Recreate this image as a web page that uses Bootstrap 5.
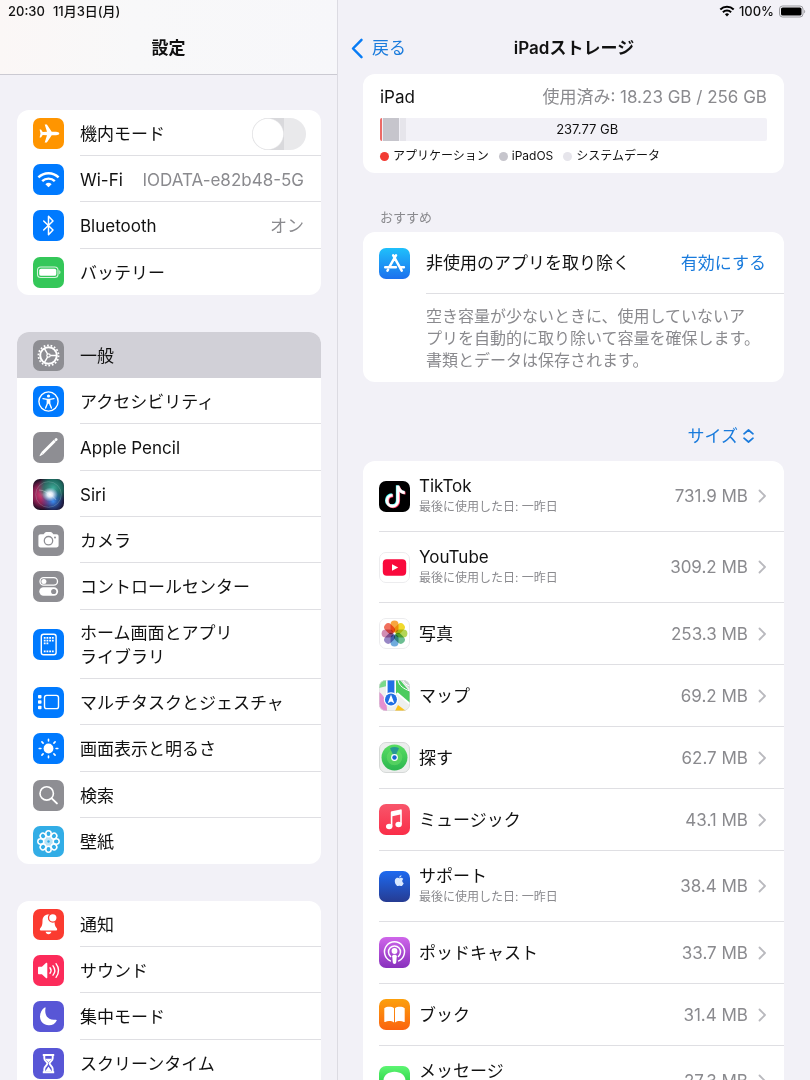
<!DOCTYPE html>
<html lang="ja">
<head>
<meta charset="utf-8">
<meta name="viewport" content="width=device-width, initial-scale=1">
<title>設定 – iPadストレージ</title>
<link href="https://cdn.jsdelivr.net/npm/bootstrap@5.3.0/dist/css/bootstrap.min.css" rel="stylesheet">
<style>
:root{--page:#f2f1f7;--line:#dfdfe3;--muted:#8a8a8e;--blue:#1a7bdc}
body{font-family:Inter,"Noto Sans CJK JP",sans-serif;font-size:17px;line-height:22px;color:#111;background:var(--page)}
.muted{color:var(--muted)}
.blue{color:var(--blue)}
.shell{display:grid;grid-template-columns:338px minmax(0,1fr);height:100vh}
.pane{overflow-y:auto;scrollbar-width:none}
.pane::-webkit-scrollbar{display:none}
.side{border-right:1px solid #dcdbe2}
.side-head{height:75px;border-bottom:1px solid #cbcad2;background:linear-gradient(90deg,#fbf7f6,#f8f8f9 40%,#f7f7fa)}
.status{height:22px;font-size:13px;font-weight:500}
.title-row{height:52px}
.title-row h1,.title-row h2{font-size:17px;line-height:22px;font-weight:600;margin:0}
.main-title{display:grid;grid-template-columns:1fr auto 1fr;align-items:center}
.panel{background:#fff;border-radius:12px;overflow:hidden}
.groups{padding:35px 16px 0 17px;display:grid;gap:37px}
.group-cut{border-radius:12px 12px 0 0}
.set-row{display:flex;align-items:center;gap:16px;padding-left:16px;min-height:46px;color:#111;text-decoration:none}
.set-row:nth-child(3n){min-height:47px}
.set-row.tall{min-height:69px;line-height:24px}
.set-row>.cell{display:flex;align-items:center;justify-content:space-between;flex:1;align-self:stretch;padding:2px 17px 0 0;border-bottom:1px solid var(--line)}
.set-row:last-child>.cell,.set-row.current>.cell{border-bottom:0}
.set-row.current{background:#d1d0d7}
.tile{width:31px;height:31px;flex:none;display:block}
.set-row .form-switch{padding:0;margin:0 -2px 0 0;min-height:0}
.form-switch .form-check-input{width:54px;height:32px;margin:0;float:none;display:block;border:0;background-color:#e9e9eb;
 background-image:radial-gradient(circle closest-side,#fff 92%,#d9d9dc 100%);background-size:32px 32px;background-position:left center;background-repeat:no-repeat}
.form-switch .form-check-input:checked{background-color:#34c759;background-position:right center}
.content{padding:0 26px 0 25px}
.plain{border:0;background:none;padding:0}
.usage{padding:12px 17px 9px 17px}
.usage-bar{height:23px;border-radius:2px;background:var(--page);gap:1px;font-size:13px;line-height:23px;margin-top:10px}
.seg-app{background:#ec6a66}.seg-os{background:#c6c5cc}.seg-sys{background:#e6e5eb}
.legend-list{font-size:12px;line-height:16px;gap:10px;margin-top:7px}
.dot{width:9px;height:9px;border-radius:50%;margin-right:4px}
.dot-app{background:#f23b34}.dot-os{background:#c6c5cc}.dot-sys{background:#e6e5eb}
.caption{font-size:13px;line-height:18px;margin:35px 0 6px 17px}
.rec{padding-left:16px}
.rec-head{display:flex;align-items:center;gap:16px}
.rec-head .cell{display:flex;align-items:center;justify-content:space-between;flex:1;height:62px;border-bottom:1px solid var(--line);padding-right:18px}
.rec p{font-size:16px;margin:0;padding:11px 0 11px 47px}
.sort{height:79px;padding:28px 29px 0 0}
.app-row{display:flex;align-items:center;height:62px;margin-left:16px;padding-right:17px;border-bottom:1px solid var(--line);color:#111;text-decoration:none}
.app-row.two{height:71px}
.app-row .tile{margin-right:9px}
.app-row small{display:block;font-size:12px;line-height:20px;color:var(--muted)}
.app-row .chev{margin-left:10px}
</style>
</head>
<body>
<svg width="0" height="0" class="position-absolute" aria-hidden="true">
 <defs>
  <linearGradient id="gStore" x2="0" y2="1"><stop stop-color="#1fc0fb"/><stop offset="1" stop-color="#1c70ee"/></linearGradient>
  <linearGradient id="gMusic" x2="0" y2="1"><stop stop-color="#f8566b"/><stop offset="1" stop-color="#fa2d48"/></linearGradient>
  <linearGradient id="gSup" x2="0" y2="1"><stop stop-color="#1d6af0"/><stop offset="1" stop-color="#263b92"/></linearGradient>
  <linearGradient id="gPod" x2="0" y2="1"><stop stop-color="#cf66ea"/><stop offset="1" stop-color="#8830bd"/></linearGradient>
  <linearGradient id="gBook" x2="0" y2="1"><stop stop-color="#fca00c"/><stop offset="1" stop-color="#fb6310"/></linearGradient>
  <linearGradient id="gMsg" x2="0" y2="1"><stop stop-color="#5df573"/><stop offset="1" stop-color="#0cbd2a"/></linearGradient>
  <linearGradient id="gFind" x2="0" y2="1"><stop stop-color="#59dd62"/><stop offset="1" stop-color="#2cb750"/></linearGradient>
  <radialGradient id="gS1" cx=".3" cy=".5" r=".5"><stop stop-color="#e2447f"/><stop offset=".6" stop-color="#a3245c" stop-opacity=".8"/><stop offset="1" stop-color="#a3245c" stop-opacity="0"/></radialGradient>
  <radialGradient id="gS2" cx=".65" cy=".3" r=".5"><stop stop-color="#3fae9b"/><stop offset=".6" stop-color="#1e7c6b" stop-opacity=".8"/><stop offset="1" stop-color="#1e7c6b" stop-opacity="0"/></radialGradient>
  <radialGradient id="gS3" cx=".65" cy=".72" r=".4"><stop stop-color="#3b8cf0"/><stop offset="1" stop-color="#2c50b8" stop-opacity="0"/></radialGradient>
  <radialGradient id="gS4"><stop stop-color="#fff"/><stop offset=".35" stop-color="#eef4ff" stop-opacity=".9"/><stop offset="1" stop-color="#cfe0ff" stop-opacity="0"/></radialGradient>
  <clipPath id="cut"><rect width="31" height="31" rx="7"/></clipPath>
  <symbol id="chev" viewBox="0 0 9 14"><path d="M1.500 1.500 7 7l-5.500 5.500" fill="none" stroke="#b9b9be" stroke-width="1.800" stroke-linecap="round" stroke-linejoin="round"/></symbol>
 </defs>
</svg>

<div class="shell">
 <nav class="pane side" aria-label="設定">
  <header class="side-head">
   <div class="status d-flex align-items-center ps-2"><span class="me-2">20:30</span><span>11月3日(月)</span></div>
   <div class="title-row d-flex align-items-center justify-content-center"><h1>設定</h1></div>
  </header>

  <div class="groups">
   <div class="panel">
    <div class="set-row">
     <svg class="tile" viewBox="0 0 31 31"><rect width="31" height="31" rx="7" fill="#ff9500"/><path fill="#fff" d="M26.300 15.500c0-1-1.600-1.700-3.300-1.700h-4.300L13.900 6.600h-2.200l2.300 7.200-4.300.2-1.700-2.400H6.600l.9 3.900-.9 3.900H8l1.700-2.400 4.300.2-2.300 7.200h2.200l4.800-7.200H23c1.700 0 3.300-.7 3.300-1.700z"/></svg>
     <div class="cell"><label for="air">機内モード</label><div class="form-check form-switch"><input class="form-check-input" type="checkbox" role="switch" id="air"></div></div>
    </div>
    <a class="set-row" href="#wifi">
     <svg class="tile" viewBox="0 0 31 31"><rect width="31" height="31" rx="7" fill="#007aff"/><g fill="none" stroke="#fff" stroke-width="2.400"><path d="M5.400 13.400a14.300 14.300 0 0 1 20.200 0M9.200 17.200a9 9 0 0 1 12.600 0"/></g><path fill="#fff" d="M12.400 20.200a4.600 4.600 0 0 1 6.200 0l-3.100 3.100z"/></svg>
     <div class="cell"><span>Wi-Fi</span><span class="muted">IODATA-e82b48-5G</span></div>
    </a>
    <a class="set-row" href="#bt">
     <svg class="tile" viewBox="0 0 31 31"><rect width="31" height="31" rx="7" fill="#007aff"/><path fill="none" stroke="#fff" stroke-width="1.500" stroke-linejoin="round" stroke-linecap="round" d="m10.700 11 9.300 9-4.500 4.700V6.300L20 11l-9.300 9"/></svg>
     <div class="cell"><span>Bluetooth</span><span class="muted">オン</span></div>
    </a>
    <a class="set-row" href="#battery">
     <svg class="tile" viewBox="0 0 31 31"><rect width="31" height="31" rx="7" fill="#34c759"/><rect x="4.500" y="10" width="20.500" height="10.500" rx="3.300" fill="none" stroke="#fff" stroke-width="1.100" opacity=".8"/><rect x="6.200" y="11.700" width="17.100" height="7.100" rx="1.900" fill="#fff"/><path fill="#fff" opacity=".8" d="M26.300 13.300c1.500.4 1.500 3.500 0 3.900z"/></svg>
     <div class="cell"><span>バッテリー</span></div>
    </a>
   </div>

   <div class="panel">
    <a class="set-row current" href="#general" aria-current="page">
     <svg class="tile" viewBox="0 0 31 31"><rect width="31" height="31" rx="7" fill="#8e8e93"/><g fill="none" stroke="#fff"><circle cx="15.500" cy="15.500" r="10.100" stroke-width="1.700" stroke-dasharray="1.760 1.766"/><circle cx="15.500" cy="15.500" r="8.300" stroke-width="2"/><circle cx="15.500" cy="15.500" r="1.700" stroke-width="1.200"/><path stroke-width="1.500" d="M17.200 15.500h6M14.600 14l-3-5.200M14.600 17l-3 5.200"/></g></svg>
     <div class="cell"><span>一般</span></div>
    </a>
    <a class="set-row" href="#acc">
     <svg class="tile" viewBox="0 0 31 31"><rect width="31" height="31" rx="7" fill="#007aff"/><circle cx="15.500" cy="15.500" r="9.600" fill="none" stroke="#fff" stroke-width="1.400"/><circle cx="15.500" cy="10" r="1.600" fill="#fff"/><path d="m10 12.600 4.200.8h2.600l4.200-.8M14.400 14v3.400L12.600 22M16.600 14v3.400l1.800 4.600" fill="none" stroke="#fff" stroke-width="1.400" stroke-linecap="round" stroke-linejoin="round"/><path fill="#fff" d="M13.900 13h3.200v4.700h-3.200z"/></svg>
     <div class="cell"><span>アクセシビリティ</span></div>
    </a>
    <a class="set-row" href="#pencil">
     <svg class="tile" viewBox="0 0 31 31"><rect width="31" height="31" rx="7" fill="#8e8e93"/><path stroke="#fff" stroke-width="2.800" stroke-linecap="round" d="m22.900 7.700.3-.3"/><path stroke="#fff" stroke-width="2.800" d="M21.800 8.800 9.300 21.300"/><path fill="#fff" d="m8.300 20.300-1.700 3.300c-.1.500.2.700.7.500l3-1.800z"/></svg>
     <div class="cell"><span>Apple Pencil</span></div>
    </a>
    <a class="set-row" href="#siri">
     <svg class="tile" viewBox="0 0 31 31"><g clip-path="url(#cut)"><path fill="#190d22" d="M0 0h31v31H0z"/><path fill="url(#gS1)" d="M0 0h31v31H0z"/><path fill="url(#gS2)" d="M0 0h31v31H0z"/><path fill="url(#gS3)" d="M0 0h31v31H0z"/><circle cx="15.500" cy="15.500" r="12.800" fill="none" stroke="#a9c3c9" stroke-opacity=".35" stroke-width=".8"/><ellipse cx="17" cy="15.500" rx="8" ry="7" fill="url(#gS4)"/><path d="M6 11c5 0 8 3 11 4.500s5 4 6 5.500" stroke="#fff" stroke-opacity=".3" fill="none"/></g></svg>
     <div class="cell"><span>Siri</span></div>
    </a>
    <a class="set-row" href="#camera">
     <svg class="tile" viewBox="0 0 31 31"><rect width="31" height="31" rx="7" fill="#8e8e93"/><path fill="#fff" d="M7.600 9.300h3l1.300-1.600c.4-.5.800-.7 1.400-.7h4.400c.6 0 1 .2 1.400.7l1.300 1.600h3c1.400 0 2.200.8 2.200 2.200v8.700c0 1.400-.8 2.200-2.200 2.200H7.600c-1.400 0-2.200-.8-2.200-2.200v-8.700c0-1.400.8-2.200 2.200-2.200z"/><circle cx="15.500" cy="15.700" r="4.200" fill="none" stroke="#8e8e93" stroke-width="1.300"/><circle cx="22" cy="12.400" r="1" fill="#8e8e93"/></svg>
     <div class="cell"><span>カメラ</span></div>
    </a>
    <a class="set-row" href="#cc">
     <svg class="tile" viewBox="0 0 31 31"><rect width="31" height="31" rx="7" fill="#8e8e93"/><rect x="7" y="6.700" width="17.500" height="7.400" rx="3.700" fill="none" stroke="#fff" stroke-width="1.300"/><circle cx="10.900" cy="10.400" r="2.500" fill="#fff"/><rect x="6.300" y="16.300" width="18.800" height="8.500" rx="4.200" fill="#fff"/><circle cx="20.700" cy="20.500" r="2.600" fill="#8e8e93"/></svg>
     <div class="cell"><span>コントロールセンター</span></div>
    </a>
    <a class="set-row tall" href="#home">
     <svg class="tile" viewBox="0 0 31 31"><rect width="31" height="31" rx="7" fill="#007aff"/><rect x="8.300" y="5.200" width="14.800" height="20.600" rx="2.300" fill="none" stroke="#fff" stroke-width="1.400"/><path stroke="#fff" stroke-width="1.800" stroke-dasharray="1.800 .9" d="M10.800 8.900h9.900M10.800 11.600h9.900M10.800 14.300h4.500M10.800 22.300h9.900"/></svg>
     <div class="cell"><span>ホーム画面とアプリ<br>ライブラリ</span></div>
    </a>
    <a class="set-row" href="#multi">
     <svg class="tile" viewBox="0 0 31 31"><rect width="31" height="31" rx="7" fill="#007aff"/><rect x="11.500" y="8.400" width="14" height="13.200" rx="2.200" fill="none" stroke="#fff" stroke-width="1.400"/><g fill="#fff"><rect x="5" y="7.900" width="3.500" height="3.500" rx=".8"/><rect x="5" y="13.300" width="3.500" height="3.500" rx=".8"/><rect x="5" y="18.700" width="3.500" height="3.500" rx=".8"/></g></svg>
     <div class="cell"><span>マルチタスクとジェスチャ</span></div>
    </a>
    <a class="set-row" href="#display">
     <svg class="tile" viewBox="0 0 31 31"><rect width="31" height="31" rx="7" fill="#007aff"/><circle cx="15.500" cy="15.500" r="4.900" fill="#fff"/><path stroke="#fff" stroke-width="1.600" stroke-linecap="round" d="M15.500 6.200v1.700M15.500 23.100v1.700M6.200 15.500h1.700M23.100 15.500h1.700M8.900 8.900l1.200 1.200M20.900 20.900l1.200 1.200M8.900 22.100l1.200-1.200M20.900 10.100l1.200-1.200"/></svg>
     <div class="cell"><span>画面表示と明るさ</span></div>
    </a>
    <a class="set-row" href="#search">
     <svg class="tile" viewBox="0 0 31 31"><rect width="31" height="31" rx="7" fill="#8e8e93"/><circle cx="13.700" cy="13.400" r="6.700" fill="none" stroke="#fff" stroke-width="1.600"/><path stroke="#fff" stroke-width="2" stroke-linecap="round" d="m18.700 18.400 5.200 5"/></svg>
     <div class="cell"><span>検索</span></div>
    </a>
    <a class="set-row" href="#wall">
     <svg class="tile" viewBox="0 0 31 31"><rect width="31" height="31" rx="7" fill="#32ade6"/><circle cx="15.500" cy="15.500" r="5.600" fill="#fff" opacity=".65"/><g fill="none" stroke="#fff" stroke-width="1.500"><ellipse id="pt" cx="15.500" cy="7.800" rx="2.700" ry="3"/><use href="#pt" transform="rotate(45 15.500 15.500)"/><use href="#pt" transform="rotate(90 15.500 15.500)"/><use href="#pt" transform="rotate(135 15.500 15.500)"/><use href="#pt" transform="rotate(180 15.500 15.500)"/><use href="#pt" transform="rotate(225 15.500 15.500)"/><use href="#pt" transform="rotate(270 15.500 15.500)"/><use href="#pt" transform="rotate(315 15.500 15.500)"/></g><circle cx="15.500" cy="15.500" r="1.200" fill="#32ade6"/></svg>
     <div class="cell"><span>壁紙</span></div>
    </a>
   </div>

   <div class="panel group-cut">
    <a class="set-row" href="#notice">
     <svg class="tile" viewBox="0 0 31 31"><rect width="31" height="31" rx="7" fill="#fb3b30"/><path fill="#fff" d="M15.500 5.500c-3.800 0-6 2.500-6 6.300 0 4-.6 5.600-2.100 7.200-.9.900-.8 2.500.5 2.500h15.200c1.300 0 1.400-1.600.5-2.500-1.500-1.600-2.100-3.200-2.100-7.200 0-3.800-2.200-6.300-6-6.300zM12.600 22.700h5.800c-.3 1.600-1.400 2.500-2.900 2.500s-2.600-.9-2.900-2.500z"/><circle cx="19.800" cy="8.800" r="4.300" fill="#fff" stroke="#fb3b30" stroke-width="1.300"/></svg>
     <div class="cell"><span>通知</span></div>
    </a>
    <a class="set-row" href="#sound">
     <svg class="tile" viewBox="0 0 31 31"><rect width="31" height="31" rx="7" fill="#fc2b5a"/><path fill="#fff" d="M5 12.800c0-.7.400-1.100 1.100-1.100h2.800l4-3.700c.6-.5 1.400-.3 1.400.6v13.800c0 .9-.8 1.100-1.400.6l-4-3.700H6.100c-.7 0-1.100-.4-1.100-1.100z"/><g fill="none" stroke="#fff" stroke-linecap="round" stroke-width="1.400"><path d="M17 12.700c1.300 1.700 1.300 3.900 0 5.600M20 10.800c2.200 2.900 2.200 6.500 0 9.400M23 8.700c3.200 4.200 3.200 9.400 0 13.600"/></g></svg>
     <div class="cell"><span>サウンド</span></div>
    </a>
    <a class="set-row" href="#focus">
     <svg class="tile" viewBox="0 0 31 31"><rect width="31" height="31" rx="7" fill="#5856d6"/><path fill="#fff" d="M12.600 7.100c-1.600 6.700 2.400 12.700 9.900 11.600.9-.2 1.600.2 1.100 1.100a8.600 8.600 0 0 1-7.800 4.500c-5 0-8.800-3.800-8.800-8.700 0-3.800 2-7.400 4.700-9 .8-.4 1.100-.2.900.5z"/></svg>
     <div class="cell"><span>集中モード</span></div>
    </a>
    <a class="set-row" href="#screentime">
     <svg class="tile" viewBox="0 0 31 31"><rect width="31" height="31" rx="7" fill="#5856d6"/><path fill="none" stroke="#fff" stroke-width="1.900" stroke-linejoin="round" d="M9.800 7h11.400M9.800 24.200h11.400M11.300 7.500v2.700c0 2.700 3.100 3.500 3.100 5.400s-3.100 2.700-3.100 5.400v2.700M19.700 7.500v2.700c0 2.700-3.100 3.500-3.100 5.400s3.100 2.700 3.100 5.400v2.700"/><path fill="#fff" d="M12.300 10.800h6.400c-.6 1.500-2.400 2.400-3.200 3.900-.8-1.500-2.600-2.400-3.200-3.900zM15.500 18.500l3.400 5h-6.800z"/></svg>
     <div class="cell"><span>スクリーンタイム</span></div>
    </a>
   </div>
  </div>
 </nav>

 <main class="pane">
  <div class="status d-flex align-items-center justify-content-end pe-1">
   <svg width="16" height="12" viewBox="0 0 16 12"><g fill="none" stroke="#000" stroke-width="2"><path d="M1.300 4.500a9.600 9.600 0 0 1 13.400 0M3.900 7.200a5.900 5.900 0 0 1 8.200 0"/></g><path d="M5.900 9.200a3.100 3.100 0 0 1 4.200 0L8 11.400z"/></svg>
   <span class="mx-1">100%</span>
   <svg width="28" height="13" viewBox="0 0 28 13"><rect x="1.500" y="1" width="23.500" height="11" rx="3" fill="none" stroke="#9b9ba0"/><rect x="3" y="2.500" width="20.500" height="8" rx="1.600"/><path fill="#9b9ba0" d="M26.200 4.700c1.300.4 1.300 3.200 0 3.600z"/></svg>
  </div>
  <div class="title-row main-title">
   <a href="#back" class="blue text-decoration-none d-flex align-items-center ps-2"><svg class="ms-1 me-2" width="14" height="21" viewBox="0 0 14 21"><path d="M11.500 1.800 3 10.500l8.500 8.700" fill="none" stroke="#087cf5" stroke-width="2.500" stroke-linecap="round" stroke-linejoin="round"/></svg>戻る</a>
   <h2>iPadストレージ</h2><span></span>
  </div>

  <div class="content">
   <section class="panel usage">
    <div class="d-flex justify-content-between"><span>iPad</span><span class="muted">使用済み: 18.23 GB / 256 GB</span></div>
    <div class="usage-bar d-flex overflow-hidden">
     <div class="seg-app" style="width:0.4%"></div><div class="seg-os" style="width:4.2%"></div><div class="seg-sys" style="width:1.7%"></div>
     <div class="flex-fill text-center">237.77 GB</div>
    </div>
    <div class="legend-list d-flex">
     <span class="d-flex align-items-center"><i class="dot dot-app"></i>アプリケーション</span>
     <span class="d-flex align-items-center"><i class="dot dot-os"></i>iPadOS</span>
     <span class="d-flex align-items-center"><i class="dot dot-sys"></i>システムデータ</span>
    </div>
   </section>

   <h3 class="caption muted fw-normal">おすすめ</h3>
   <section class="panel rec">
    <div class="rec-head">
     <svg class="tile" viewBox="0 0 31 31"><rect width="31" height="31" rx="7" fill="url(#gStore)"/><g stroke="#fff" stroke-width="2.500" stroke-linecap="round" fill="none"><path d="m17 7.400-6.300 11M14.200 7.400l8.500 15.200M6.200 19.200h10.700M21.700 19.200h3.200M9.100 21.700l-.6 1"/></g></svg>
     <div class="cell"><span>非使用のアプリを取り除く</span><button type="button" class="plain blue">有効にする</button></div>
    </div>
    <p class="muted">空き容量が少ないときに、使用していないア<br>プリを自動的に取り除いて容量を確保します。<br>書類とデータは保存されます。</p>
   </section>

   <div class="sort d-flex justify-content-end align-items-center">
    <button type="button" class="plain blue d-flex align-items-center">サイズ<svg class="ms-1" width="13" height="16" viewBox="0 0 13 16"><path d="M2 5.800 6.500 2 11 5.800M2 10.200 6.500 14l4.500-3.800" fill="none" stroke="#1a7bdc" stroke-width="1.700" stroke-linecap="round" stroke-linejoin="round"/></svg></button>
   </div>

   <section class="panel group-cut">
    <a class="app-row two" href="#tiktok">
     <svg class="tile" viewBox="0 0 31 31"><rect width="31" height="31" rx="7" fill="#000"/><g transform="translate(4.600 4.200) scale(1.360)"><path fill="#25f4ee" d="M9 0h1.980c.144.715.54 1.617 1.235 2.512C12.895 3.389 13.797 4 15 4v2c-1.753 0-3.070-.814-4-1.829V11a5 5 0 1 1-5-5v2a3 3 0 1 0 3 3z"/><path transform="translate(1.100 .9)" fill="#fe2c55" d="M9 0h1.980c.144.715.54 1.617 1.235 2.512C12.895 3.389 13.797 4 15 4v2c-1.753 0-3.070-.814-4-1.829V11a5 5 0 1 1-5-5v2a3 3 0 1 0 3 3z"/><path transform="translate(.5 .4)" fill="#fff" stroke="#fff" stroke-width=".3" d="M9 0h1.980c.144.715.54 1.617 1.235 2.512C12.895 3.389 13.797 4 15 4v2c-1.753 0-3.070-.814-4-1.829V11a5 5 0 1 1-5-5v2a3 3 0 1 0 3 3z"/></g></svg>
     <div class="flex-fill"><span>TikTok</span><small>最後に使用した日: 一昨日</small></div><span class="muted">731.9 MB</span><svg class="chev" width="9" height="14"><use href="#chev"/></svg>
    </a>
    <a class="app-row two" href="#youtube">
     <svg class="tile" viewBox="0 0 31 31"><rect x=".5" y=".5" width="30" height="30" rx="6.500" fill="#fff" stroke="#ececee"/><rect x="3.800" y="7.200" width="23.400" height="16.600" rx="4" fill="#f9093c"/><path fill="#fff" d="m13 12.200 6.200 3.300-6.200 3.300z"/></svg>
     <div class="flex-fill"><span>YouTube</span><small>最後に使用した日: 一昨日</small></div><span class="muted">309.2 MB</span><svg class="chev" width="9" height="14"><use href="#chev"/></svg>
    </a>
    <a class="app-row" href="#photos">
     <svg class="tile" viewBox="0 0 31 31"><rect x=".5" y=".5" width="30" height="30" rx="6.500" fill="#fff" stroke="#ececee"/><g style="isolation:isolate"><g fill-opacity=".88"><rect x="11.500" y="2.600" width="8" height="11.800" rx="4" fill="#f79a24" style="mix-blend-mode:multiply"/><rect x="11.500" y="2.600" width="8" height="11.800" rx="4" fill="#efd40f" transform="rotate(45 15.500 15.500)" style="mix-blend-mode:multiply"/><rect x="11.500" y="2.600" width="8" height="11.800" rx="4" fill="#a9cf3d" transform="rotate(90 15.500 15.500)" style="mix-blend-mode:multiply"/><rect x="11.500" y="2.600" width="8" height="11.800" rx="4" fill="#58b583" transform="rotate(135 15.500 15.500)" style="mix-blend-mode:multiply"/><rect x="11.500" y="2.600" width="8" height="11.800" rx="4" fill="#5c9fd8" transform="rotate(180 15.500 15.500)" style="mix-blend-mode:multiply"/><rect x="11.500" y="2.600" width="8" height="11.800" rx="4" fill="#8a76bd" transform="rotate(225 15.500 15.500)" style="mix-blend-mode:multiply"/><rect x="11.500" y="2.600" width="8" height="11.800" rx="4" fill="#cc7da8" transform="rotate(270 15.500 15.500)" style="mix-blend-mode:multiply"/><rect x="11.500" y="2.600" width="8" height="11.800" rx="4" fill="#ee5c48" transform="rotate(315 15.500 15.500)" style="mix-blend-mode:multiply"/></g></g></svg>
     <span class="flex-fill">写真</span><span class="muted">253.3 MB</span><svg class="chev" width="9" height="14"><use href="#chev"/></svg>
    </a>
    <a class="app-row" href="#maps">
     <svg class="tile" viewBox="0 0 31 31"><g clip-path="url(#cut)"><path fill="#eef0ee" d="M0 0h31v31H0z"/><path fill="#79d98a" d="M0 0h8v6L0 8z"/><path fill="#4ccb5f" d="M17 0h4l10 12v12L17 13z"/><path fill="#c9d3cd" d="M22 0h9v9z"/><path stroke="#fff" stroke-width="1" fill="none" d="M19 0c1 6 6 9 12 11M24 0c1 3 3 5 7 6"/><path fill="#e58fd0" d="M0 12c5 3 8 10 8 19H0z"/><path fill="#fbc31c" d="m19 25 8 6H16z"/><path stroke="#fff" stroke-width="2" d="m18 13 13 11"/><path fill="#fff" d="M7 0h10v16H7z"/><path fill="#2170e6" d="M8.600 0h6.800v14H8.600z"/><circle cx="12" cy="19.500" r="7.200" fill="#fff"/><circle cx="12" cy="19.500" r="6" fill="#1f6fe3"/><path fill="#fff" d="m12 14.500 3.300 8.700-3.300-1.800-3.300 1.800z"/></g><rect x=".3" y=".3" width="30.400" height="30.400" rx="6.800" fill="none" stroke="#d6d9da" stroke-width=".6"/></svg>
     <span class="flex-fill">マップ</span><span class="muted">69.2 MB</span><svg class="chev" width="9" height="14"><use href="#chev"/></svg>
    </a>
    <a class="app-row" href="#find">
     <svg class="tile" viewBox="0 0 31 31"><rect x=".5" y=".5" width="30" height="30" rx="6.500" fill="#eceeed" stroke="#d5d8d7"/><circle cx="15.500" cy="15.500" r="13" fill="url(#gFind)"/><circle cx="15.500" cy="15.500" r="7.800" fill="#69dd69" opacity=".55"/><path fill="#1c8a9d" opacity=".8" d="M11 6.200c2.800-1.600 6.200-1.600 9 0l-3 6.600h-3z"/><circle cx="15.500" cy="15.500" r="3.400" fill="#fff"/><circle cx="15.500" cy="15.500" r="2.200" fill="#1766d2"/></svg>
     <span class="flex-fill">探す</span><span class="muted">62.7 MB</span><svg class="chev" width="9" height="14"><use href="#chev"/></svg>
    </a>
    <a class="app-row" href="#music">
     <svg class="tile" viewBox="0 0 31 31"><rect width="31" height="31" rx="7" fill="url(#gMusic)"/><g fill="#fff"><path d="M11.800 8.400c0-.7.400-1.100 1-1.200l8.700-1.800c.8-.2 1.300.2 1.300 1v13.800h-1.600v-9.600l-7.800 1.700v10.200h-1.600z"/><ellipse cx="10.200" cy="22.500" rx="3.200" ry="2.700"/><ellipse cx="19.600" cy="20.500" rx="3.200" ry="2.700"/></g></svg>
     <span class="flex-fill">ミュージック</span><span class="muted">43.1 MB</span><svg class="chev" width="9" height="14"><use href="#chev"/></svg>
    </a>
    <a class="app-row two" href="#support">
     <svg class="tile" viewBox="0 0 31 31"><rect width="31" height="31" rx="7" fill="url(#gSup)"/><g transform="translate(14.800 4.200) scale(.68)" fill="#d9e9ff"><path d="M11.182.008C11.148-.03 9.923.023 8.857 1.180c-1.066 1.156-.902 2.482-.878 2.516s1.520.087 2.475-1.258.762-2.391.728-2.430m3.314 11.733c-.048-.096-2.325-1.234-2.113-3.422s1.675-2.789 1.698-2.854-.597-.79-1.254-1.157a3.700 3.700 0 0 0-1.563-.434c-.108-.003-.483-.095-1.254.116-.508.139-1.653.589-1.968.607-.316.018-1.256-.522-2.267-.665-.647-.125-1.333.131-1.824.328-.49.196-1.422.754-2.074 2.237-.652 1.482-.311 3.830-.067 4.560s.625 1.924 1.273 2.796c.576.984 1.340 1.667 1.659 1.899s1.219.386 1.843.067c.502-.308 1.408-.485 1.766-.472.357.013 1.061.154 1.782.539.571.197 1.111.115 1.652-.105.541-.221 1.324-1.059 2.238-2.758q.520-1.185.473-1.282"/></g></svg>
     <div class="flex-fill"><span>サポート</span><small>最後に使用した日: 一昨日</small></div><span class="muted">38.4 MB</span><svg class="chev" width="9" height="14"><use href="#chev"/></svg>
    </a>
    <a class="app-row" href="#podcast">
     <svg class="tile" viewBox="0 0 31 31"><rect width="31" height="31" rx="7" fill="url(#gPod)"/><g fill="none" stroke="#fff" stroke-width="1.500" stroke-linecap="round"><path d="M11.300 23.900a10 10 0 1 1 8.400 0M11.600 19.500a6 6 0 1 1 7.800 0"/></g><circle cx="15.500" cy="14" r="2.900" fill="#fff"/><path fill="#fff" d="M13.200 19.200c0-1 .9-1.500 2.300-1.500s2.300.5 2.300 1.500l-.6 6.400c-.1.900-.7 1.400-1.700 1.400s-1.600-.5-1.700-1.400z"/></svg>
     <span class="flex-fill">ポッドキャスト</span><span class="muted">33.7 MB</span><svg class="chev" width="9" height="14"><use href="#chev"/></svg>
    </a>
    <a class="app-row" href="#books">
     <svg class="tile" viewBox="0 0 31 31"><rect width="31" height="31" rx="7" fill="url(#gBook)"/><path fill="#fff" d="M15 9.300C13.300 7.400 7.500 7.400 5.600 9c-.3.200-.3.400-.3.700v12.700c0 .5.400.7.800.5 2.900-1.300 6.500-1.100 8.900.6zM16 9.300c1.700-1.900 7.500-1.900 9.400-.3.300.2.300.4.300.7v12.700c0 .5-.4.700-.8.5-2.900-1.300-6.500-1.100-8.900.6z"/></svg>
     <span class="flex-fill">ブック</span><span class="muted">31.4 MB</span><svg class="chev" width="9" height="14"><use href="#chev"/></svg>
    </a>
    <a class="app-row two" href="#messages">
     <svg class="tile" viewBox="0 0 31 31"><rect width="31" height="31" rx="7" fill="url(#gMsg)"/><path fill="#fff" d="M15.500 5.800c-6.200 0-11 3.800-11 8.700 0 3.100 1.900 5.700 4.700 7.300-.2 1.300-.9 2.500-1.700 3.300 1.800-.1 3.600-.9 4.900-2.200 1 .2 2 .3 3.100.3 6.200 0 11-3.800 11-8.700s-4.800-8.700-11-8.700z"/></svg>
     <div class="flex-fill"><span>メッセージ</span><small>最後に使用した日: 一昨日</small></div><span class="muted">27.3 MB</span><svg class="chev" width="9" height="14"><use href="#chev"/></svg>
    </a>
   </section>
  </div>
 </main>
</div>
<script src="https://cdn.jsdelivr.net/npm/bootstrap@5.3.0/dist/js/bootstrap.bundle.min.js"></script>
</body>
</html>
